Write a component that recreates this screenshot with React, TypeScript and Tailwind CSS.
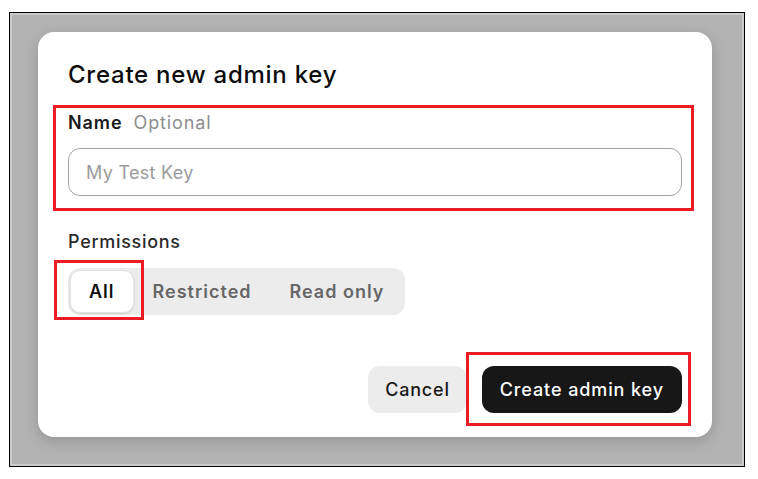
import React from "react";

const tabs = ["All", "Restricted", "Read only"];

const App = () => {
  const selected = "All";

  return (
    <div
      className="h-[479px] w-[758px] bg-white pl-[9px] pt-[12px]"
      style={{ fontFamily: "Inter, 'Liberation Sans', sans-serif" }}
    >
      <div className="h-[455px] w-[736px] border border-black">
        <div className="h-full w-full border-2 border-[#cbcbcb] bg-[#b3b3b3] pl-[26px] pt-[17px]">
          <div className="relative h-[405px] w-[674px] rounded-[16px] bg-white px-[30px] pt-[27px] shadow-[0_4px_14px_rgba(0,0,0,0.18)]">
            <h2 className="text-[24px] font-medium leading-[32px] tracking-[0.75px] text-[#0d0d0d]">
              Create new admin key
            </h2>

            <div className="mt-[20px] flex gap-[11px] text-[18px] leading-[24px] tracking-[0.9px]">
              <span className="font-semibold text-[#1a1a1a]">Name</span>
              <span className="text-[#8e8e8e]">Optional</span>
            </div>
            <input
              className="mt-[13px] h-[48px] w-full rounded-[12px] border-[1.5px] border-[#a3a3a3] px-[17px] text-[18px] tracking-[0.3px] text-[#0d0d0d] outline-none placeholder:text-[#9b9b9b]"
              placeholder="My Test Key"
            />

            <div className="mt-[34px] text-[18px] font-medium leading-[24px] tracking-[0.7px] text-[#2a2a2a]">
              Permissions
            </div>
            <div className="mt-[14px] inline-flex h-[47px] rounded-[12px] bg-[#ececec] p-[2px]">
              {tabs.map((t) => (
                <div
                  key={t}
                  className={
                    t === selected
                      ? "flex items-center rounded-[10px] border border-[#e2e2e2] bg-white px-[18px] text-[18px] font-semibold tracking-[1px] text-[#111] shadow-[0_1px_2px_rgba(0,0,0,0.12)]"
                      : "flex items-center px-[19px] text-[18px] font-semibold tracking-[1px] text-[#676767]"
                  }
                >
                  {t}
                </div>
              ))}
            </div>

            <div className="mt-[51px] flex justify-end gap-[15px]">
              <button className="h-[47px] rounded-[12px] bg-[#ececec] px-[17px] text-[18px] font-medium tracking-[0.8px] text-[#1a1a1a]">
                Cancel
              </button>
              <button className="h-[47px] rounded-[12px] bg-[#171717] px-[18px] text-[18px] font-medium tracking-[0.9px] text-white">
                Create admin key
              </button>
            </div>

            {/* annotation boxes */}
            <div className="absolute left-[15px] top-[73px] h-[106px] w-[641px] border-[3px] border-[#ed1c24]" />
            <div className="absolute left-[16px] top-[228px] h-[60px] w-[90px] border-[3px] border-[#ed1c24]" />
            <div className="absolute left-[428px] top-[320px] h-[74px] w-[225px] border-[3px] border-[#ed1c24]" />
          </div>
        </div>
      </div>
    </div>
  );
};

export default App;
